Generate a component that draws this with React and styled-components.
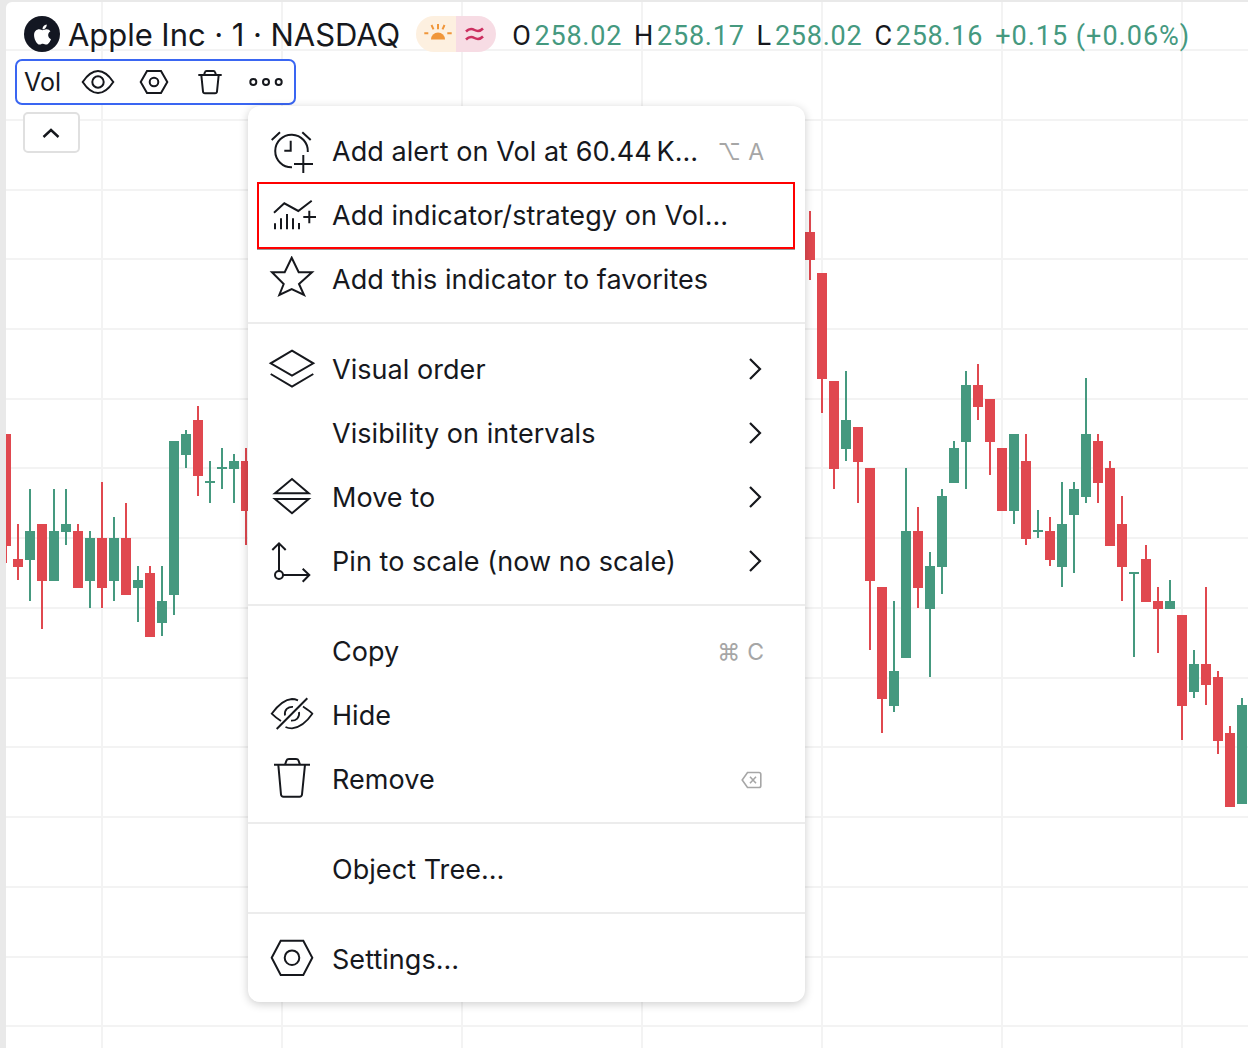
import styled, { createGlobalStyle } from 'styled-components';
import { FaApple } from 'react-icons/fa';

const GREEN = '#45997f';
const RED = '#e0484f';
const INK = '#16181d';

// page x, body top, body bottom, wick top, wick bottom, colour
const CANDLES = [
  [6, 434, 546, 434, 563, 'r'], [18, 559, 567, 524, 580, 'r'], [30, 531, 560, 489, 601, 'g'],
  [42, 524, 581, 524, 629, 'r'], [54, 531, 581, 489, 581, 'g'], [66, 524, 532, 489, 545, 'g'],
  [78, 531, 588, 524, 588, 'r'], [90, 538, 581, 531, 608, 'g'], [102, 538, 588, 482, 608, 'r'],
  [114, 538, 581, 517, 601, 'g'], [126, 538, 595, 503, 595, 'r'], [138, 580, 588, 566, 622, 'g'],
  [150, 573, 637, 566, 637, 'r'], [162, 601, 623, 566, 636, 'g'], [174, 441, 595, 441, 615, 'g'],
  [186, 434, 455, 430, 468, 'g'], [198, 420, 476, 406, 496, 'r'], [210, 481, 483, 461, 503, 'g'],
  [222, 467, 469, 448, 489, 'g'], [234, 461, 469, 454, 503, 'g'], [246, 461, 511, 448, 545, 'r'],
  [810, 232, 260, 211, 280, 'r'], [822, 273, 379, 273, 413, 'r'], [834, 381, 469, 381, 489, 'r'],
  [846, 420, 449, 371, 461, 'g'], [858, 427, 462, 427, 503, 'r'], [870, 468, 581, 468, 650, 'r'],
  [882, 587, 699, 587, 733, 'r'], [894, 671, 706, 601, 712, 'g'], [906, 531, 658, 468, 658, 'g'],
  [918, 531, 588, 507, 608, 'r'], [930, 566, 609, 552, 677, 'g'], [942, 496, 567, 489, 594, 'g'],
  [954, 448, 483, 441, 483, 'g'], [966, 385, 442, 371, 489, 'g'], [978, 385, 407, 364, 420, 'r'],
  [990, 399, 442, 399, 475, 'r'], [1002, 448, 511, 448, 511, 'r'], [1014, 434, 511, 434, 524, 'g'],
  [1026, 461, 539, 434, 545, 'r'], [1038, 530, 532, 510, 538, 'g'], [1050, 531, 560, 517, 566, 'r'],
  [1062, 524, 567, 482, 587, 'g'], [1074, 489, 515, 482, 573, 'g'], [1086, 434, 497, 378, 503, 'g'],
  [1098, 441, 483, 434, 503, 'r'], [1110, 468, 546, 461, 546, 'r'], [1122, 524, 567, 496, 601, 'r'],
  [1134, 572, 574, 572, 657, 'g'], [1146, 559, 602, 545, 602, 'r'], [1158, 601, 609, 587, 653, 'r'],
  [1170, 601, 609, 580, 609, 'g'], [1182, 615, 706, 615, 740, 'r'], [1194, 664, 692, 650, 698, 'g'],
  [1206, 664, 685, 587, 705, 'r'], [1218, 677, 741, 671, 754, 'r'], [1230, 733, 807, 726, 807, 'r'],
  [1242, 705, 804, 698, 804, 'g'],
];
const GRID_X = [102, 282, 462, 642, 822, 1002, 1182];
const GRID_Y = [50, 120, 190, 259, 329, 399, 468, 538, 608, 678, 747, 817, 887, 957, 1026];

const Global = createGlobalStyle`
  html, body { margin: 0; padding: 0; background: #e9e9e9; }
  body { font-family: Inter, "Liberation Sans", sans-serif; color: ${INK}; }
`;

const Pane = styled.div`
  position: relative;
  height: 1046px;
  margin: 2px 0 0 6px;
  background: #fff;
  border-top-left-radius: 6px;
  overflow: hidden;
`;

const ChartSvg = styled.svg`
  position: absolute;
  inset: 0;
  width: 1242px;
  height: 1046px;
  shape-rendering: crispEdges;
`;

const Legend = styled.div`
  position: relative;
  display: flex;
  flex-direction: column;
  align-items: flex-start;
`;

const TitleRow = styled.div`
  display: flex;
  align-items: center;
  height: 36px;
  margin: 14px 0 0 18px;
  white-space: nowrap;
`;

const Logo = styled.span`
  display: flex;
  align-items: center;
  justify-content: center;
  width: 36px;
  height: 36px;
  border-radius: 50%;
  background: #131722;
  color: #fff;
  font-size: 23px;
`;

const Title = styled.span`
  margin-left: 8px;
  padding-top: 1px;
  font-size: 31px;
  line-height: 36px;
  letter-spacing: -0.05px;
`;

const Badge = styled.div`
  display: flex;
  margin-left: 16px;
  border-radius: 18px;
  overflow: hidden;
  svg { display: block; }
`;

const Values = styled.div`
  display: flex;
  margin-left: 16px;
  padding-top: 3px;
  font-family: Roboto, sans-serif;
  font-size: 27px;
  line-height: 36px;
  letter-spacing: 0.75px;
  color: ${GREEN};
`;

const Ohlc = styled.span`
  margin-right: 12px;
  b { font-weight: 400; color: ${INK}; margin-right: 3px; }
`;

const Change = styled.span`
  letter-spacing: 1px;
`;

const VolBar = styled.div`
  display: flex;
  align-items: center;
  box-sizing: border-box;
  width: 281px;
  height: 46px;
  margin: 7px 0 0 9px;
  border: 2px solid #3a66f2;
  border-radius: 7px;
  background: #fff;
`;

const VolName = styled.span`
  width: 53px;
  padding-left: 7px;
  box-sizing: border-box;
  font-size: 25px;
`;

const ToolIcon = styled.span`
  display: flex;
  justify-content: center;
  width: 56px;
  flex: none;
  svg { display: block; }
`;

const Collapse = styled.div`
  display: flex;
  align-items: center;
  justify-content: center;
  box-sizing: border-box;
  width: 57px;
  height: 41px;
  margin: 7px 0 0 17px;
  border: 2px solid #e0e0e0;
  border-radius: 5px;
  background: #fff;
  svg { margin-right: 1px; }
`;

const Menu = styled.div`
  position: absolute;
  left: 242px;
  top: 104px;
  box-sizing: border-box;
  width: 557px;
  height: 896px;
  padding: 14px 0 10px;
  border-radius: 12px;
  background: #fff;
  box-shadow: 0 2px 10px rgba(0, 0, 0, 0.2);
`;

const Row = styled.div`
  position: relative;
  display: flex;
  align-items: center;
  height: 64px;
  padding: 0 41px 0 20px;
  ${(p) => p.$marked && `
    &::after {
      content: '';
      position: absolute;
      left: 9px;
      right: 10px;
      top: -2px;
      bottom: -1px;
      border: 2px solid #f00;
      box-shadow: 0 1px 0 #999;
    }
  `}
`;

const RowIcon = styled.span`
  flex: none;
  width: 48px;
  height: 48px;
  svg { display: block; }
`;

const Label = styled.span`
  flex: 1;
  margin-left: 16px;
  font-size: 27px;
  line-height: 36px;
  letter-spacing: 0.05px;
  white-space: nowrap;
`;

const Shortcut = styled.span`
  display: flex;
  align-items: center;
  gap: 7px;
  font-size: 23px;
  color: #a6a6a6;
  font-family: Inter, "DejaVu Sans", sans-serif;
`;

const Divider = styled.div`
  height: 2px;
  margin: 10px 0 14px;
  background: #ececec;
`;

const ChevronSvg = styled.svg`
  margin: 0 2px 2px 0;
`;

const BackspaceSvg = styled.svg`
  margin-right: 2px;
`;

const Stroke = ({ size = 48, h, children }) => (
  <svg width={size} height={h || size} viewBox={`0 0 ${size} ${h || size}`} fill="none" stroke={INK} strokeWidth="2">
    {children}
  </svg>
);

const AlertIcon = () => (
  <Stroke>
    <path d="M39.8 24A16.3 16.3 0 1 0 24 39.3" />
    <path d="M22.7 12.7V22.7H16.3M3.7 12 12 4.3M34.3 4.3 42.7 12M35.3 27V45M26 36H45" />
  </Stroke>
);
const IndicatorIcon = () => (
  <Stroke>
    <path d="M6 20.7 16.3 11.3 30.3 19 43.7 8.7" />
    <path d="M7 37.3V31.3M13 37.3V26.3M19 37.3V22M25 37.3V26.3M31 37.3V31M41.3 18.7V31.3M35.3 25H48" />
  </Stroke>
);
const StarIcon = () => (
  <Stroke>
    <path d="M23.7 1.7 30.7 16.3H44L31 28 36 39 23.7 33 11.3 39 15.7 28 4 16.3H16.7Z" />
  </Stroke>
);
const LayersIcon = () => (
  <Stroke>
    <path d="M24 4.7 45.3 17.3 24 29.7 2.7 17.3Z" />
    <path d="M2.7 28 24 40.7 45.3 28" />
  </Stroke>
);
const MoveIcon = () => (
  <Stroke>
    <path d="M7 19.3 24 5 40.7 19.3ZM7 25 24 39.3 40.7 25Z" />
  </Stroke>
);
const PinIcon = () => (
  <Stroke>
    <path d="M11 5.3V33M4.3 12 11 5.3 17.7 12M15 37H41.3M34.7 30.7 41.3 37 34.7 43.7" />
    <circle cx="11" cy="37" r="4" />
  </Stroke>
);
const HideIcon = () => (
  <Stroke>
    <path d="M13 29C9 26.5 6 24 3.7 21.7 9 14.5 16 7.5 24 7 26 7 28 7.5 30 8.3M35 14.5C38 16.5 42 19 44.3 21.7 39 29.5 32 35.5 24 36.3 21.5 36.3 19.5 36 17.5 35" strokeWidth="1.8" />
    <path d="M17 23.5C16 18 20 14.5 25 14.8M31 20C32 25.5 28 29 23 28.7" strokeWidth="1.8" />
    <path d="M8.7 37 39.3 6.3" />
  </Stroke>
);
const TrashIcon = () => (
  <Stroke>
    <path d="M6 8.7H42M17 8.7 18.5 4.5Q19 3 21 3H28Q30 3 30.5 4.5L32 8.7" />
    <path d="M10.3 8.7 13 38.5Q13.2 40.7 15.5 40.7H31.5Q33.8 40.7 34 38.5L37 8.7" />
  </Stroke>
);
const SettingsIcon = () => (
  <Stroke>
    <path d="M3.7 21.7 12.7 4.7H35.3L44.3 21.7 35.3 39H12.7Z" />
    <circle cx="24" cy="21.7" r="7.3" />
  </Stroke>
);
const ChevronRight = () => (
  <ChevronSvg width="14" height="24" viewBox="0 0 14 24" fill="none" stroke={INK} strokeWidth="2.2">
    <path d="M2 2 12 12 2 22" />
  </ChevronSvg>
);
const BackspaceIcon = () => (
  <BackspaceSvg width="21" height="18" viewBox="0 0 21 18" fill="none" stroke="#a6a6a6" strokeWidth="1.6">
    <path d="M6.5 1.5H18Q19.8 1.5 19.8 3.3V14.7Q19.8 16.5 18 16.5H6.5L1.2 9ZM9 5.8 15 12.2M15 5.8 9 12.2" />
  </BackspaceSvg>
);

const MENU = [
  [
    { icon: <AlertIcon />, label: 'Add alert on Vol at 60.44\u202fK…', keys: ['⌥', 'A'] },
    { icon: <IndicatorIcon />, label: 'Add indicator/strategy on Vol…', marked: true },
    { icon: <StarIcon />, label: 'Add this indicator to favorites' },
  ],
  [
    { icon: <LayersIcon />, label: 'Visual order', more: true },
    { label: 'Visibility on intervals', more: true },
    { icon: <MoveIcon />, label: 'Move to', more: true },
    { icon: <PinIcon />, label: 'Pin to scale (now no scale)', more: true },
  ],
  [
    { label: 'Copy', keys: ['⌘', 'C'] },
    { icon: <HideIcon />, label: 'Hide' },
    { icon: <TrashIcon />, label: 'Remove', back: true },
  ],
  [{ label: 'Object Tree…' }],
  [{ icon: <SettingsIcon />, label: 'Settings…' }],
];

function Chart() {
  return (
    <ChartSvg viewBox="6 2 1242 1046">
      {GRID_X.map((x) => <rect key={x} x={x - 1} y="0" width="2" height="1048" fill="#f3f3f3" />)}
      {GRID_Y.map((y) => <rect key={y} x="0" y={y - 1} width="1248" height="2" fill="#f3f3f3" />)}
      {CANDLES.map(([x, top, bottom, high, low, c]) => (
        <g key={x} fill={c === 'r' ? RED : GREEN}>
          <rect x={x - 1} y={high} width="2" height={low - high} />
          <rect x={x - 5} y={top} width="10" height={bottom - top} />
        </g>
      ))}
    </ChartSvg>
  );
}

function ContextMenu() {
  return (
    <Menu>
      {MENU.map((group, i) => (
        <div key={i}>
          {i > 0 && <Divider />}
          {group.map((item) => (
            <Row key={item.label} $marked={item.marked}>
              <RowIcon>{item.icon}</RowIcon>
              <Label>{item.label}</Label>
              {item.keys && <Shortcut>{item.keys.map((k) => <span key={k}>{k}</span>)}</Shortcut>}
              {item.back && <BackspaceIcon />}
              {item.more && <ChevronRight />}
            </Row>
          ))}
        </div>
      ))}
    </Menu>
  );
}

export default function App() {
  return (
    <>
      <Global />
      <Pane>
        <Chart />
        <Legend>
          <TitleRow>
            <Logo><FaApple /></Logo>
            <Title>Apple Inc · 1 · NASDAQ</Title>
            <Badge>
              <svg width="40" height="36" fill="none" stroke="#f0963a" strokeWidth="2" style={{ background: '#fdf0e0' }}>
                <path d="M15 23.5a7 7 0 0 1 14 0Z" fill="#f0963a" stroke="none" />
                <path d="M22 8V13.3M15.5 9 17.5 13.3M28.5 9 26.5 13.3M8.3 17.3H12.3M31.3 17.3H35.7" />
              </svg>
              <svg width="40" height="36" fill="none" stroke="#cc2f60" strokeWidth="2.5" style={{ background: '#f7dce4' }}>
                <path d="M10 15.5Q14 11.5 18.5 14T27 12.5M10 23.5Q14 19.5 18.5 22T27 20.5" />
              </svg>
            </Badge>
            <Values>
              <Ohlc><b>O</b>258.02</Ohlc>
              <Ohlc><b>H</b>258.17</Ohlc>
              <Ohlc><b>L</b>258.02</Ohlc>
              <Ohlc><b>C</b>258.16</Ohlc>
              <Change>+0.15 (+0.06%)</Change>
            </Values>
          </TitleRow>
          <VolBar>
            <VolName>Vol</VolName>
            <ToolIcon>
              <Stroke size={36} h={28}>
                <path d="M2.7 14C8 6 13 3 18 3S28 6 33.3 14C28 22 23 25 18 25S8 22 2.7 14Z" />
                <circle cx="18" cy="14" r="5.7" />
              </Stroke>
            </ToolIcon>
            <ToolIcon>
              <Stroke size={36} h={28}>
                <path d="M4.7 14 11 3H25L31.3 14 25 25H11Z" />
                <circle cx="18" cy="14" r="4.3" />
              </Stroke>
            </ToolIcon>
            <ToolIcon>
              <Stroke size={36} h={28}>
                <path d="M6.3 7H29.7M12 7 13 4Q13.3 3 14.5 3H21.5Q22.7 3 23 4L24 7" />
                <path d="M9.3 7 11 23.5Q11.2 25.3 13 25.3H23Q24.8 25.3 25 23.5L26.7 7" />
              </Stroke>
            </ToolIcon>
            <ToolIcon>
              <Stroke size={36} h={28}>
                <circle cx="5.3" cy="14" r="3" />
                <circle cx="18" cy="14" r="3" />
                <circle cx="30.7" cy="14" r="3" />
              </Stroke>
            </ToolIcon>
          </VolBar>
          <Collapse>
            <svg width="18" height="10" viewBox="0 0 18 10" fill="none" stroke={INK} strokeWidth="2.4">
              <path d="M1.5 9 9 2 16.5 9" />
            </svg>
          </Collapse>
        </Legend>
        <ContextMenu />
      </Pane>
    </>
  );
}
